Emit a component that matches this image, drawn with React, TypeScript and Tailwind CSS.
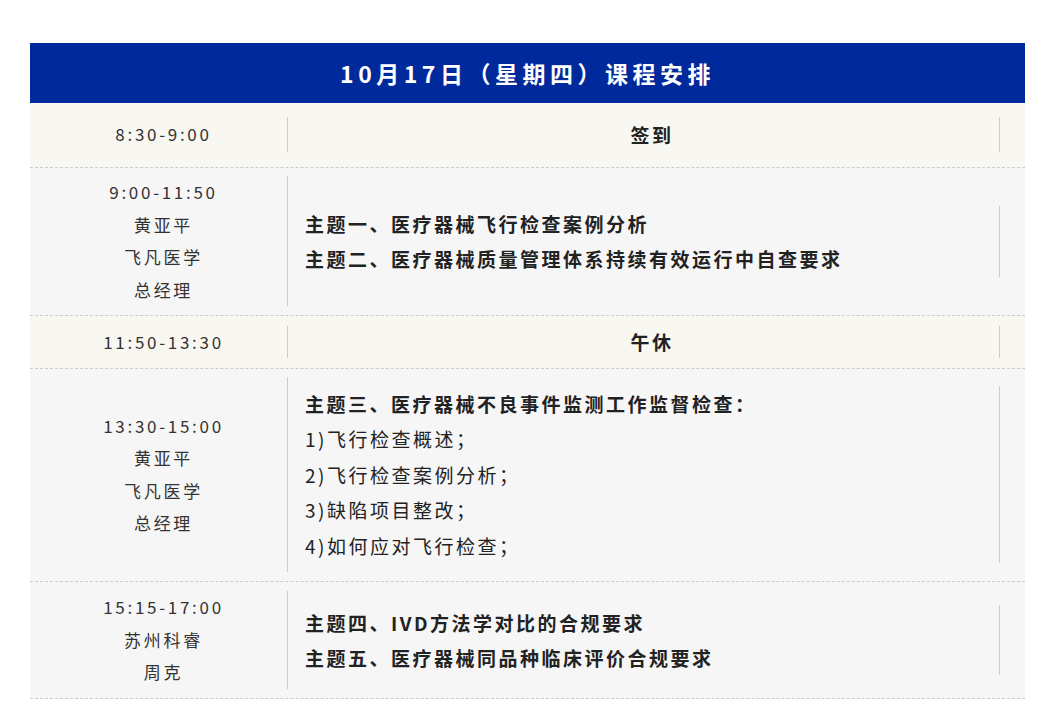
import React from "react";

const font = { fontFamily: '"Noto Sans CJK SC", "Noto Sans", sans-serif' };

function Left({ lines }: { lines: string[] }) {
  return (
    <div className="w-[258px] shrink-0 border-r border-[#cccccc] flex flex-col items-center justify-center pl-[10px] text-[17px] leading-[32.5px] tracking-[2.7px] text-[#333333]">
      {lines.map((l, i) => (
        <div key={i}>{l}</div>
      ))}
    </div>
  );
}

export default function App() {
  return (
    <div className="w-[1056px] h-[727px] bg-white pt-[43px] px-[30px]" style={font}>
      <div className="w-[995px]">
        <div className="h-[60px] bg-[#00299b] flex items-center justify-center text-white text-[23px] font-bold tracking-[4.5px]">
          10月17日（星期四）课程安排
        </div>

        {/* Row 1 */}
        <div className="flex bg-[#f9f7f1] pt-[14px] pb-[15px] border-b border-dashed border-[#cccccc] h-[65px]">
          <Left lines={["8:30-9:00"]} />
          <div className="flex-1 mr-[25px] border-r border-[#cccccc] pl-[17px] flex items-center justify-center text-[19px] leading-[35px] tracking-[2.5px] font-bold text-[#222222]">
            签到
          </div>
        </div>

        {/* Row 2 */}
        <div className="flex bg-[#f6f6f6] pt-[8px] pb-[9px] border-b border-dashed border-[#cccccc]">
          <Left lines={["9:00-11:50", "黄亚平", "飞凡医学", "总经理"]} />
          <div className="flex-1 mr-[25px] self-center border-r border-[#cccccc] pl-[17px] text-[19px] leading-[35.5px] tracking-[2.5px] font-bold text-[#222222]">
            <div>主题一、医疗器械飞行检查案例分析</div>
            <div>主题二、医疗器械质量管理体系持续有效运行中自查要求</div>
          </div>
        </div>

        {/* Row 3 */}
        <div className="flex bg-[#f9f7f1] pt-[10px] pb-[10px] border-b border-dashed border-[#cccccc] h-[53px]">
          <Left lines={["11:50-13:30"]} />
          <div className="flex-1 mr-[25px] border-r border-[#cccccc] pl-[17px] flex items-center justify-center text-[19px] leading-[32px] tracking-[2.5px] font-bold text-[#222222]">
            午休
          </div>
        </div>

        {/* Row 4 */}
        <div className="flex bg-[#f6f6f6] pt-[8px] pb-[9px] border-b border-dashed border-[#cccccc]">
          <Left lines={["13:30-15:00", "黄亚平", "飞凡医学", "总经理"]} />
          <div className="flex-1 mr-[25px] my-[9px] self-center border-r border-[#cccccc] pl-[17px] text-[19px] leading-[35.4px] tracking-[2.5px] text-[#222222]">
            <div className="font-bold">主题三、医疗器械不良事件监测工作监督检查：</div>
            <div>1)飞行检查概述；</div>
            <div>2)飞行检查案例分析；</div>
            <div>3)缺陷项目整改；</div>
            <div>4)如何应对飞行检查；</div>
          </div>
        </div>

        {/* Row 5 */}
        <div className="flex bg-[#f6f6f6] pt-[9px] pb-[9px] border-b border-dashed border-[#cccccc]">
          <Left lines={["15:15-17:00", "苏州科睿", "周克"]} />
          <div className="flex-1 mr-[25px] self-center border-r border-[#cccccc] pl-[17px] text-[19px] leading-[35px] tracking-[2.5px] font-bold text-[#222222]">
            <div>主题四、IVD方法学对比的合规要求</div>
            <div>主题五、医疗器械同品种临床评价合规要求</div>
          </div>
        </div>
      </div>
    </div>
  );
}
